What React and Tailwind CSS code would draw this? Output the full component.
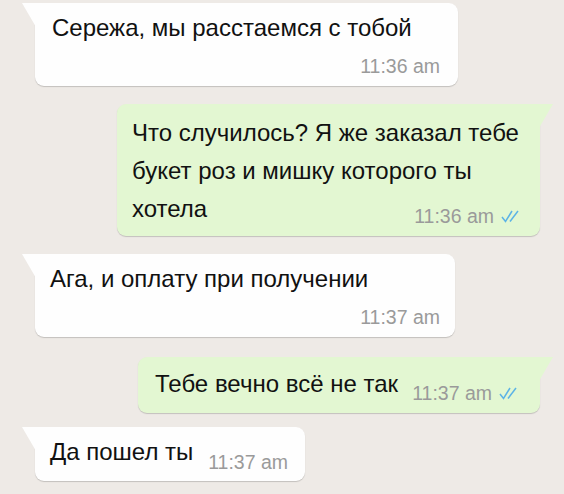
import React from "react";

const font = { fontFamily: '"Liberation Sans", Arial, sans-serif' };

const Ticks = () => (
  <svg width="22" height="13" viewBox="0 0 22 13" className="ml-[6px] mb-[3px]">
    <path d="M2 7 L5.5 11.5 L12 1" fill="none" stroke="#5cb3e6" strokeWidth="1.5" />
    <path d="M10 11.5 L18 1" fill="none" stroke="#5cb3e6" strokeWidth="1.5" />
  </svg>
);

const Time = ({ t, read }) => (
  <div className="flex items-end text-[19.5px] leading-[20px] text-[#9a9a9a] whitespace-nowrap">
    <span>{t}</span>
    {read && <Ticks />}
  </div>
);

// входящее сообщение (белое, хвостик слева)
const InBubble = ({ className = "", children }) => (
  <div className={`relative self-start ml-[35px] bg-[#fefefe] rounded-[9px] rounded-tl-none shadow-[0_1px_1px_rgba(0,0,0,0.18)] ${className}`}>
    <svg width="14" height="24" viewBox="0 0 14 24" className="absolute -left-[13px] top-0">
      <polygon points="0,0 14,0 14,24" fill="#fefefe" />
    </svg>
    {children}
  </div>
);

// исходящее сообщение (зелёное, хвостик справа)
const OutBubble = ({ className = "", children }) => (
  <div className={`relative self-end mr-[24px] bg-[#e3f7d2] rounded-[9px] rounded-tr-none shadow-[0_1px_1px_rgba(0,0,0,0.18)] ${className}`}>
    <svg width="14" height="24" viewBox="0 0 14 24" className="absolute -right-[13px] top-0">
      <polygon points="0,0 14,0 0,24" fill="#e3f7d2" />
    </svg>
    {children}
  </div>
);

export default function App() {
  return (
    <div style={font} className="w-[564px] h-[494px] overflow-hidden bg-[#eeeae6] flex flex-col text-[#111111]">
      <InBubble className="mt-[3px] w-[423px] pt-[11px] pl-[17px] pr-[18px] pb-[10px]">
        <div className="text-[24px] leading-[28px]">Сережа, мы расстаемся с тобой</div>
        <div className="flex justify-end mt-[14px]">
          <Time t="11:36 am" />
        </div>
      </InBubble>

      <OutBubble className="mt-[18px] w-[423px] pt-[10px] pl-[15px] pr-[18px] pb-[8px]">
        <div className="text-[24px] leading-[38px]">
          <div>Что случилось? Я же заказал тебе</div>
          <div>букет роз и мишку которого ты</div>
          <div className="flex justify-between items-end">
            <span>хотела</span>
            <div className="mb-[2px]">
              <Time t="11:36 am" read />
            </div>
          </div>
        </div>
      </OutBubble>

      <InBubble className="mt-[18px] w-[420px] pt-[11px] pl-[15px] pr-[15px] pb-[10px]">
        <div className="text-[24px] leading-[28px]">Ага, и оплату при получении</div>
        <div className="flex justify-end mt-[14px]">
          <Time t="11:37 am" />
        </div>
      </InBubble>

      <OutBubble className="mt-[20px] w-[402px] pt-[13px] pl-[17px] pr-[20px] pb-[10px] flex justify-between items-start">
        <div className="text-[24px] leading-[28px]">Тебе вечно всё не так</div>
        <div className="mt-[13px]">
          <Time t="11:37 am" read />
        </div>
      </OutBubble>

      <InBubble className="mt-[14px] w-[270px] pt-[11px] pl-[15px] pr-[17px] pb-[9px] flex justify-between items-start">
        <div className="text-[24px] leading-[28px]">Да пошел ты</div>
        <div className="mt-[14px]">
          <Time t="11:37 am" />
        </div>
      </InBubble>
    </div>
  );
}
